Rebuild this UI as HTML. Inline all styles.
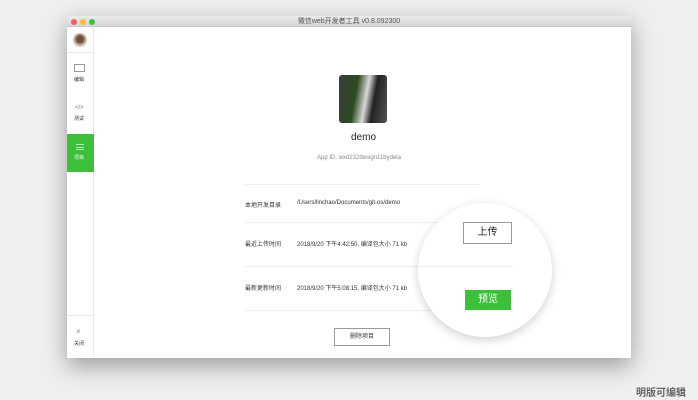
<!DOCTYPE html>
<html><head><meta charset="utf-8"><style>
*{margin:0;padding:0;box-sizing:border-box}
body{width:698px;height:400px;background:#efefef;font-family:"Liberation Sans","Noto Sans CJK SC",sans-serif;position:relative;overflow:hidden}
.win{position:absolute;left:67px;top:16px;width:564px;height:342px;background:#fff;box-shadow:0 8px 22px rgba(0,0,0,.35)}
.tb{position:absolute;left:0;top:0;width:564px;height:11px;background:linear-gradient(#ebebeb,#d6d6d6);border-bottom:1px solid #c8c8c8;font-size:7px;color:#555;text-align:center;line-height:11px}
.dot{position:absolute;top:3px;width:6px;height:6px;border-radius:50%}
.side{position:absolute;left:0;top:11px;width:27px;height:331px;border-right:1px solid #e8e8e8}
.t{position:absolute;font-size:6px;color:#333;white-space:nowrap}
.line{position:absolute;left:245px;width:235px;height:1px;background:#eee}
</style></head><body>
<div class="win">
<div class="tb">微信web开发者工具 v0.8.092300
<div class="dot" style="left:4px;background:#fc5b57"></div>
<div class="dot" style="left:13px;background:#fdbc2e"></div>
<div class="dot" style="left:22px;background:#33c748"></div></div>
<div class="side">
<div style="position:absolute;left:6px;top:6px;width:14px;height:14px;border-radius:50%;background:radial-gradient(circle at 50% 45%,#6b5040 30%,#d8c8b8 60%)"></div>
<div style="position:absolute;left:0;top:25px;width:26px;height:1px;background:#e6e6e6"></div>
<div style="position:absolute;left:7px;top:37px;width:11px;height:8px;border:1px solid #999"></div>
<div class="t" style="left:7px;top:49px;font-size:5px">编辑</div>
<div class="t" style="left:8px;top:78px;color:#777">&lt;/&gt;</div>
<div class="t" style="left:7px;top:88px;font-size:5px">测试</div>
<div style="position:absolute;left:0;top:107px;width:27px;height:38px;background:#3cc03a">
<div style="position:absolute;left:9px;top:10px;width:8px;height:6px;border-top:1px solid #bdf0bb;border-bottom:1px solid #bdf0bb"></div>
<div style="position:absolute;left:9px;top:13px;width:8px;height:1px;background:#bdf0bb"></div>
<div class="t" style="left:7px;top:20px;font-size:5px;color:#fff">项目</div></div>
<div style="position:absolute;left:0;top:288px;width:26px;height:1px;background:#e6e6e6"></div>
<div class="t" style="left:9px;top:300px;color:#888;font-size:8px">×</div>
<div class="t" style="left:7px;top:313px;font-size:5px">关闭</div>
</div>
</div>
<div style="position:absolute;left:339px;top:75px;width:48px;height:48px;border-radius:3px;background:linear-gradient(100deg,#3c3c3c 0%,#2c4a20 35%,#d8d8d8 55%,#222 70%,#555 100%)"></div>
<div class="t" style="left:351px;top:132px;font-size:10px;color:#222">demo</div>
<div class="t" style="left:317px;top:155px;color:#888">App ID: wxd232design11bydela</div>
<div class="line" style="top:184px"></div>
<div class="line" style="top:222px"></div>
<div class="line" style="top:266px"></div>
<div class="line" style="top:310px"></div>
<div class="t" style="left:245px;top:200px">本地开发目录</div>
<div class="t" style="left:297px;top:200px">/Users/linchao/Documents/git-os/demo</div>
<div class="t" style="left:245px;top:239px">最近上传时间</div>
<div class="t" style="left:297px;top:239px">2018/9/20 下午4:42:50, 编译包大小 71 kb</div>
<div class="t" style="left:245px;top:283px">最新更新时间</div>
<div class="t" style="left:297px;top:283px">2018/9/20 下午5:08:15, 编译包大小 71 kb</div>
<div style="position:absolute;left:418px;top:203px;width:134px;height:134px;border-radius:50%;background:#fff;box-shadow:0 3px 10px rgba(0,0,0,.18);overflow:hidden">
<div style="position:absolute;left:0;top:63px;width:96px;height:1px;background:#eee"></div>
<div style="position:absolute;left:45px;top:19px;width:49px;height:22px;border:1px solid #999;font-size:10px;color:#222;text-align:center;line-height:20px">上传</div>
<div style="position:absolute;left:47px;top:87px;width:46px;height:20px;background:#3cc03a;font-size:10px;color:#fff;text-align:center;line-height:20px">预览</div>
</div>
<div style="position:absolute;left:334px;top:328px;width:56px;height:18px;border:1px solid #999;font-size:6px;color:#333;text-align:center;line-height:16px">删除项目</div>
<div class="t" style="left:636px;top:384px;font-size:10px;font-weight:bold;color:#666">明版可编辑</div>
</body></html>
